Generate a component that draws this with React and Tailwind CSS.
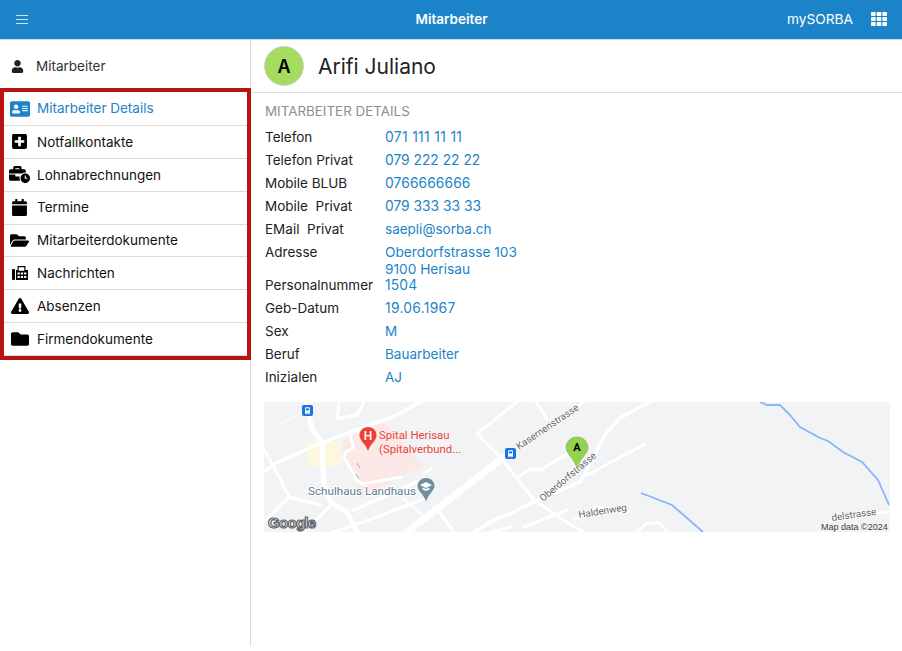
import React from "react";
import {
  FaUser,
  FaAddressCard,
  FaPlusSquare,
  FaBusinessTime,
  FaCalendar,
  FaFolderOpen,
  FaExclamationTriangle,
  FaFolder,
  FaTh,
} from "react-icons/fa";

const FaxIcon = () => (
  <svg width="16" height="14" viewBox="0 0 16 14" fill="#000000">
    <rect x="0" y="3" width="3" height="11" rx="1" />
    <path d="M4 4h1.500V0h8v4H16v10H4z" />
    <rect x="6.700" y="1.200" width="5.600" height="3.600" fill="#ffffff" />
    <rect x="5.500" y="6.500" width="2.300" height="2" fill="#ffffff" />
    <rect x="8.800" y="6.500" width="2.300" height="2" fill="#ffffff" />
    <rect x="12.100" y="6.500" width="2.300" height="2" fill="#ffffff" />
    <rect x="5.500" y="10" width="2.300" height="2" fill="#ffffff" />
    <rect x="8.800" y="10" width="2.300" height="2" fill="#ffffff" />
    <rect x="12.100" y="10" width="2.300" height="2" fill="#ffffff" />
  </svg>
);

const menu = [
  { label: "Mitarbeiter Details", icon: FaAddressCard, size: "text-[20px]", height: "h-[34px]", active: true },
  { label: "Notfallkontakte", icon: FaPlusSquare, size: "text-[17px]", height: "h-[32.85px]" },
  { label: "Lohnabrechnungen", icon: FaBusinessTime, size: "text-[21px]", height: "h-[32.85px]" },
  { label: "Termine", icon: FaCalendar, size: "text-[17px]", height: "h-[32.85px]" },
  { label: "Mitarbeiterdokumente", icon: FaFolderOpen, size: "text-[19px]", height: "h-[32.85px]" },
  { label: "Nachrichten", icon: FaxIcon, size: "text-[16px]", height: "h-[32.85px]" },
  { label: "Absenzen", icon: FaExclamationTriangle, size: "text-[18px]", height: "h-[32.85px]" },
  { label: "Firmendokumente", icon: FaFolder, size: "text-[18px]", height: "h-[32.85px]" },
];

const details = [
  { label: "Telefon", value: ["071 111 11 11"], cls: "text-[13.8px] tracking-[0.35px]" },
  { label: "Telefon Privat", value: ["079 222 22 22"], cls: "text-[13.8px]" },
  { label: "Mobile BLUB", value: ["0766666666"], cls: "text-[13.8px] tracking-[0.1px]" },
  { label: "Mobile  Privat", value: ["079 333 33 33"], cls: "text-[13.8px]" },
  { label: "EMail  Privat", value: ["saepli@sorba.ch"], cls: "text-[13.5px]" },
  { label: "Adresse", value: ["Oberdorfstrasse 103", "9100 Herisau"], cls: "text-[13.7px]" },
  { label: "Personalnummer", value: ["1504"], cls: "text-[13.8px] tracking-[0.15px]" },
  { label: "Geb-Datum", value: ["19.06.1967"], cls: "text-[13.8px] tracking-[0.3px]" },
  { label: "Sex", value: ["M"], cls: "text-[13.5px]" },
  { label: "Beruf", value: ["Bauarbeiter"], cls: "text-[13.5px]" },
  { label: "Inizialen", value: ["AJ"], cls: "text-[13.5px]" },
];

const BusStop = ({ x, y }) => (
  <g transform={`translate(${x},${y})`}>
    <rect width="11" height="11" rx="2" fill="#1a73e8" />
    <path d="M3 3.200q0-1 1-1h3q1 0 1 1v4.600q0 .6-.6.6h-3.800q-.6 0-.6-.6z" fill="#ffffff" />
    <rect x="3.800" y="3.400" width="3.400" height="2" fill="#1a73e8" />
    <rect x="3.400" y="8.400" width="1.200" height="1" fill="#ffffff" />
    <rect x="6.400" y="8.400" width="1.200" height="1" fill="#ffffff" />
  </g>
);

const MapDrawing = () => (
  <svg viewBox="0 0 626 130" className="block w-full h-full" fontFamily="Roboto, sans-serif">
    <rect width="626" height="130" fill="#f2f3f5" />
    <rect x="43" y="40" width="34" height="25" fill="#fef7e0" />
    <polygon points="77,43 80,38 120,20 160,65 140,73 97,97 93,78" fill="#fce8e6" />

    <g fill="none" stroke="#ffffff" strokeLinecap="round" strokeLinejoin="round">
      <polyline points="143,130 160,117 240,55" strokeWidth="7" />
      <polyline points="240,55 320,0" strokeWidth="3" />
      <polyline points="43,0 45,13 48,27 58,40 60,87 67,100 83,110 93,130" strokeWidth="5" />
      <polyline points="0,70 10,62 57,41 133,13 150,3 158,0" strokeWidth="3.500" />
      <polyline points="75,0 73,17 93,13 100,0" strokeWidth="3" />
      <polyline points="17,22 40,10" strokeWidth="1" />
      <polyline points="0,47 10,65 25,95 57,103" strokeWidth="3" />
      <polyline points="25,95 0,120" strokeWidth="3" />
      <polyline points="40,130 67,103" strokeWidth="3" />
      <polyline points="85,32 90,45 82,50 80,55 93,78 98,82 137,75" strokeWidth="3" />
      <polyline points="90,108 160,77" strokeWidth="3.500" />
      <polyline points="70,130 110,116 160,97" strokeWidth="3" />
      <polyline points="140,97 160,115" strokeWidth="2" />
      <polyline points="160,72 167,67" strokeWidth="3" />
      <polyline points="173,107 190,130" strokeWidth="3" />
      <polyline points="253,0 213,32 238,57 270,98 307,123 320,130" strokeWidth="3" />
      <polyline points="272,0 283,17" strokeWidth="3" />
      <polyline points="255,74 267,67 277,68 303,52" strokeWidth="3" />
      <polyline points="386,0 356,16 341,33 329,56 316,80 277,97 227,120 210,130" strokeWidth="3.500" />
      <polyline points="381,42 323,73" strokeWidth="3" />
      <polyline points="303,108 260,125" strokeWidth="3" />
      <polyline points="227,130 247,125" strokeWidth="3" />
      <polyline points="310,117 336,106 364,110" strokeWidth="3" />
      <polyline points="373,130 383,121 396,121 403,130" strokeWidth="3" />
      <polyline points="556,130 569,116 625,110" strokeWidth="2.500" />
    </g>

    <g fill="none" stroke="#8ab4f8" strokeWidth="1.800">
      <polyline points="496,0 503,3 516,3 526,13 536,25 556,36 564,39 579,50 598,60 614,78 625,103" />
      <polyline points="377,91 408,103 439,130" />
    </g>

    <BusStop x={38} y={3} />
    <BusStop x={241} y={46} />

    {/* one way arrows */}
    <g stroke="#9aa0a6" strokeWidth="0.800">
      <line x1="93" y1="61" x2="96" y2="66" />
      <line x1="92" y1="72" x2="95" y2="77" />
    </g>

    {/* hospital pin */}
    <path d="M104 25c-5.200 0-8.500 3.800-8.500 8.200 0 5.300 6.300 8.600 8.500 15.800 2.200-7.200 8.500-10.500 8.500-15.800 0-4.400-3.300-8.200-8.500-8.200z" fill="#ea4335" />
    <text x="104" y="38" textAnchor="middle" fontSize="12" fontWeight="500" fill="#ffffff">H</text>
    <text x="115" y="37" fontSize="11.400" fill="#e8453c">Spital Herisau</text>
    <text x="115" y="51" fontSize="11.400" fill="#e8453c">(Spitalverbund...</text>

    {/* school pin */}
    <path d="M162 76c-4.700 0-8.500 3.400-8.500 7.800 0 5 6.300 8.200 8.500 16 2.200-7.800 8.500-11 8.500-16 0-4.400-3.800-7.800-8.500-7.800z" fill="#6f8ea0" />
    <path d="M162 80l-6 3 6 3 6-3z M158.500 85.500v2l3.500 1.500 3.500-1.500v-2l-3.500 1.500z" fill="#ffffff" />
    <text x="44" y="93" fontSize="11.700" fill="#5f7d8c" stroke="#ffffff" strokeWidth="2" paintOrder="stroke">Schulhaus Landhaus</text>

    {/* street names */}
    <g fontSize="9.800" fill="#5f6368" stroke="#ffffff" strokeWidth="1.500" paintOrder="stroke">
      <text transform="translate(255,48) rotate(-34)">Kasernenstrasse</text>
      <text transform="translate(279,100) rotate(-40)">Oberdorfstrasse</text>
      <text transform="translate(315,116) rotate(-9)">Haldenweg</text>
      <text transform="translate(568,119) rotate(-8)">delstrasse</text>
    </g>

    {/* employee pin */}
    <path d="M313 35c-6.200 0-11 4.700-11 10.500 0 6.500 8 10.500 11 20.500 3-10 11-14 11-20.500 0-5.800-4.800-10.500-11-10.500z" fill="#94d14d" stroke="#7fb341" strokeWidth="0.600" />
    <text x="313" y="49" textAnchor="middle" fontSize="11" fontWeight="700" fill="#000000">A</text>

    <text
      x="4"
      y="126"
      fontFamily="Liberation Sans, sans-serif"
      fontSize="15"
      fontWeight="700"
      fill="#ffffff"
      stroke="#5f6368"
      strokeWidth="1.200"
      paintOrder="fill"
      letterSpacing="-0.700"
    >
      Google
    </text>
    <rect x="556" y="120" width="70" height="10" fill="#f2f3f5" fillOpacity="0.7" />
    <text x="557" y="128" fontFamily="Liberation Sans, sans-serif" fontSize="9" fill="#3c4043">Map data ©2024</text>
  </svg>
);

export default function App() {
  return (
    <div className="h-[651px] w-[902px] flex flex-col bg-white overflow-hidden font-['Inter',sans-serif] text-[#222]">
      {/* Top bar */}
      <header className="h-10 shrink-0 bg-[#1b84c8] border-b border-[#d8d8d8] text-white flex items-center pl-4 pr-[15px]">
        <div className="flex-1">
          <svg width="12" height="10" viewBox="0 0 12 10" stroke="#cfe4f3" strokeWidth="1">
            <line x1="0" y1="0.500" x2="12" y2="0.500" />
            <line x1="0" y1="4.500" x2="12" y2="4.500" />
            <line x1="0" y1="8.500" x2="12" y2="8.500" />
          </svg>
        </div>
        <div className="text-[13.5px] font-semibold">Mitarbeiter</div>
        <div className="flex-1 flex items-center justify-end gap-[18px]">
          <span className="text-[13.7px]">mySORBA</span>
          <FaTh className="text-[16px]" />
        </div>
      </header>

      <div className="flex flex-1 min-h-0 items-start">
        {/* Sidebar */}
        <aside className="w-[251px] h-[606px] shrink-0 border-r border-[#d8d8d8]">
          <div className="h-12 flex items-center pt-1 pl-[11px] gap-3 text-[13.5px] text-[#333]">
            <FaUser className="text-[13px] text-[#222]" />
            <span>Mitarbeiter</span>
          </div>
          <nav className="h-[272px] border-4 border-[#b81414] -mr-px">
            {menu.map((item) => {
              const Icon = item.icon;
              return (
                <div
                  key={item.label}
                  className={`${item.height} flex items-center border-b border-[#dcdcdc] text-[13.5px] ${
                    item.active ? "text-[#1b84c8]" : "text-[#111]"
                  }`}
                >
                  <span className={`w-[33px] flex justify-center pr-[2px] ${item.size} ${item.active ? "text-[#1b84c8]" : "text-black"}`}>
                    <Icon />
                  </span>
                  <span>{item.label}</span>
                </div>
              );
            })}
          </nav>
        </aside>

        {/* Main column */}
        <main className="flex-1 min-w-0">
          <div className="h-[53px] flex items-center pl-[13px] gap-[14px] border-b border-[#dcdcdc]">
            <div className="w-10 h-10 rounded-full bg-[#a6dc5e] border border-[#cfcfcf] flex items-center justify-center text-[18px] font-semibold text-black">
              A
            </div>
            <h1 className="text-[21px] text-[#222] pt-px">Arifi Juliano</h1>
          </div>

          <div className="pl-[13px] pr-3 pt-[10px]">
            <h2 className="pl-px text-[13.4px] h-[22px] leading-[17px] uppercase text-[#8e8e93]">Mitarbeiter Details</h2>
            {details.map((row) => (
              <div
                key={row.label}
                className={`flex items-baseline pl-px leading-[17px] pt-1 ${row.value.length > 1 ? "h-[33px]" : "h-[23px]"}`}
              >
                <span className="w-[120px] shrink-0 whitespace-pre text-[13.5px] text-[#222]">{row.label}</span>
                <span className={`text-[#1b84c8] ${row.cls}`}>
                  {row.value.map((line) => (
                    <div key={line}>{line}</div>
                  ))}
                </span>
              </div>
            ))}
            <div className="mt-[14px] h-[130px] w-[626px]">
              <MapDrawing />
            </div>
          </div>
        </main>
      </div>
    </div>
  );
}
